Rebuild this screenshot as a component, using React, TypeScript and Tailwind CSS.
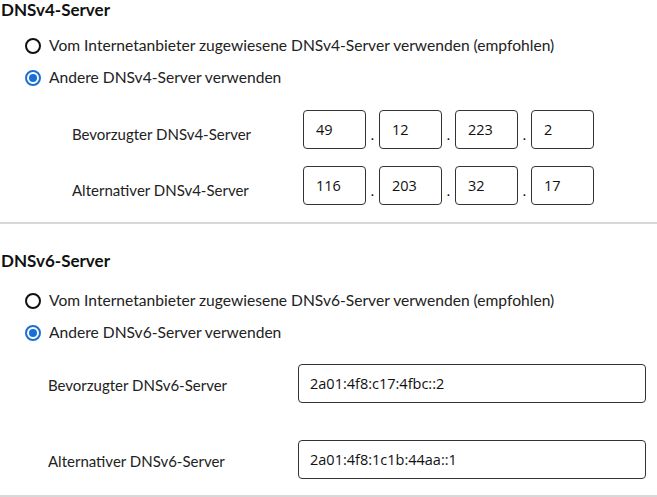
import { useState } from "react";

type Mode = "auto" | "manual";

const ui = { fontFamily: "Lato, 'Open Sans', sans-serif" };
const mono = { fontFamily: "'Open Sans', 'DejaVu Sans', sans-serif" };

function Radio({ checked, label, onSelect }: { checked: boolean; label: string; onSelect: () => void }) {
  return (
    <button type="button" onClick={onSelect} className="flex h-8 items-center gap-2 text-left text-[15.6px] text-[#222]">
      {checked ? (
        <span className="flex h-4 w-4 items-center justify-center rounded-full border-2 border-[#1a6fd6]">
          <span className="h-2 w-2 rounded-full bg-[#1a6fd6]" />
        </span>
      ) : (
        <span className="h-4 w-4 rounded-full border-2 border-[#111]" />
      )}
      <span>{label}</span>
    </button>
  );
}

function Box({ value, className }: { value: string; className: string }) {
  return (
    <div className={`flex h-[39px] items-center rounded-[4px] border border-[#333] text-[14.5px] text-[#111] ${className}`} style={mono}>
      {value}
    </div>
  );
}

function Ipv4Row({ label, parts }: { label: string; parts: string[] }) {
  return (
    <div className="flex items-center">
      <div className="mt-[9px] w-[231px] text-[15px] text-[#222]">{label}</div>
      <div className="flex items-center">
        {parts.map((p, i) => (
          <div key={i} className="flex items-center">
            {i > 0 && <span className="w-[13px] pt-[10px] text-center text-[14px] leading-none">.</span>}
            <Box value={p} className="w-[63px] pl-3" />
          </div>
        ))}
      </div>
    </div>
  );
}

function Ipv6Row({ label, value }: { label: string; value: string }) {
  return (
    <div className="flex items-center">
      <div className="mt-[3px] w-[250px] text-[15px] text-[#222]">{label}</div>
      <Box value={value} className="w-[348px] pl-[11px]" />
    </div>
  );
}

export default function App() {
  const [v4, setV4] = useState<Mode>("manual");
  const [v6, setV6] = useState<Mode>("manual");

  return (
    <div className="h-[497px] w-[657px] overflow-hidden bg-white" style={ui}>
      <section className="border-b-2 border-[#d8d8d8] pb-[17px]">
        <h2 className="pl-px text-[17px] font-bold leading-[20px] text-[#111]">DNSv4-Server</h2>
        <div className="mt-[10px] flex flex-col pl-[25px]">
          <Radio checked={v4 === "auto"} onSelect={() => setV4("auto")} label="Vom Internetanbieter zugewiesene DNSv4-Server verwenden (empfohlen)" />
          <Radio checked={v4 === "manual"} onSelect={() => setV4("manual")} label="Andere DNSv4-Server verwenden" />
        </div>
        <div className="mt-[16px] flex flex-col gap-[17px] pl-[72px]">
          <Ipv4Row label="Bevorzugter DNSv4-Server" parts={["49", "12", "223", "2"]} />
          <Ipv4Row label="Alternativer DNSv4-Server" parts={["116", "203", "32", "17"]} />
        </div>
      </section>

      <section className="border-b-2 border-[#d8d8d8] pb-[16px]">
        <h2 className="mt-[27px] pl-px text-[17px] font-bold leading-[20px] text-[#111]">DNSv6-Server</h2>
        <div className="mt-[14px] flex flex-col pl-[25px]">
          <Radio checked={v6 === "auto"} onSelect={() => setV6("auto")} label="Vom Internetanbieter zugewiesene DNSv6-Server verwenden (empfohlen)" />
          <Radio checked={v6 === "manual"} onSelect={() => setV6("manual")} label="Andere DNSv6-Server verwenden" />
        </div>
        <div className="mt-[15px] flex flex-col gap-[37px] pl-[48px]">
          <Ipv6Row label="Bevorzugter DNSv6-Server" value="2a01:4f8:c17:4fbc::2" />
          <Ipv6Row label="Alternativer DNSv6-Server" value="2a01:4f8:1c1b:44aa::1" />
        </div>
      </section>
    </div>
  );
}
